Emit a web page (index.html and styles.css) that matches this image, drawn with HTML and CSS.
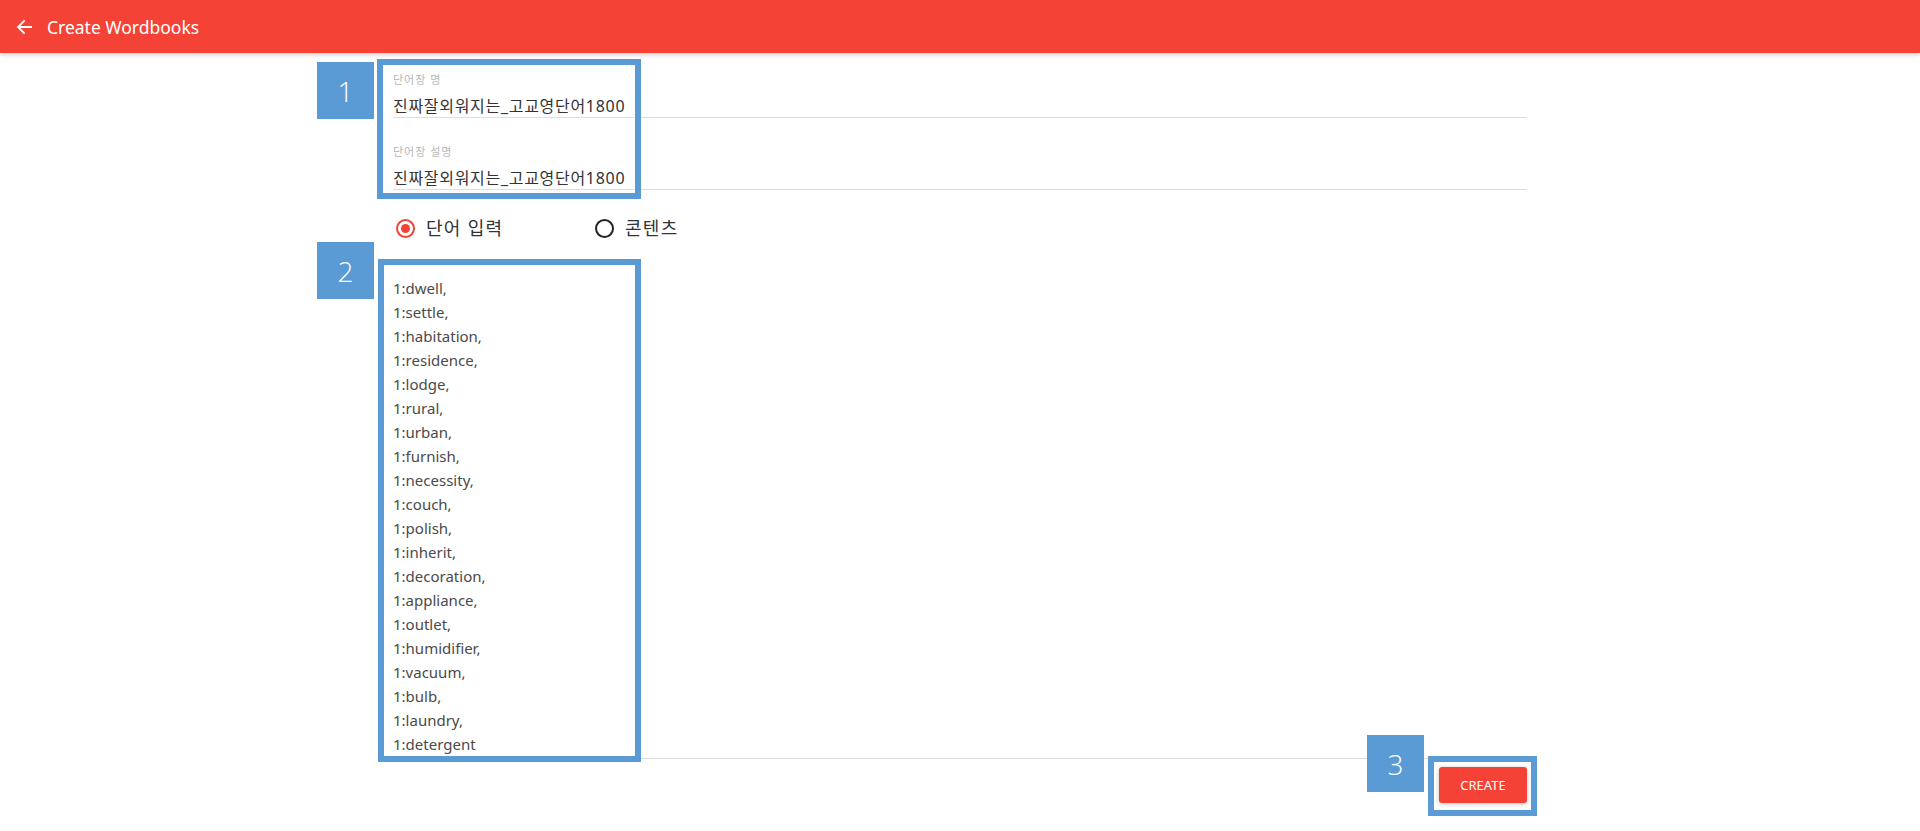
FILE: index.html
```html
<!DOCTYPE html>
<html lang="ko">
<head>
<meta charset="utf-8">
<title>Create Wordbooks</title>
<link rel="stylesheet" href="styles.css">
</head>
<body>
<header class="appbar">
  <svg class="back" width="16" height="16" viewBox="0 0 16 16" aria-hidden="true">
    <path d="M15 8H2.5M8 2L2 8l6 6" fill="none" stroke="#fff" stroke-width="1.8" stroke-linecap="square"/>
  </svg>
  <span class="title">Create Wordbooks</span>
</header>

<main class="page">
  <div class="form">
    <div class="field">
      <div class="field-label">단어장 명</div>
      <div class="field-value">진짜잘외워지는_고교영단어1800</div>
    </div>
    <div class="field field-second">
      <div class="field-label">단어장 설명</div>
      <div class="field-value">진짜잘외워지는_고교영단어1800</div>
    </div>

    <div class="radios">
      <label class="radio">
        <span class="dot checked"></span>
        <span class="radio-text">단어 입력</span>
      </label>
      <label class="radio">
        <span class="dot"></span>
        <span class="radio-text">콘텐츠</span>
      </label>
    </div>

    <div class="words">
      <div>1:dwell,</div>
      <div>1:settle,</div>
      <div>1:habitation,</div>
      <div>1:residence,</div>
      <div>1:lodge,</div>
      <div>1:rural,</div>
      <div>1:urban,</div>
      <div>1:furnish,</div>
      <div>1:necessity,</div>
      <div>1:couch,</div>
      <div>1:polish,</div>
      <div>1:inherit,</div>
      <div>1:decoration,</div>
      <div>1:appliance,</div>
      <div>1:outlet,</div>
      <div>1:humidifier,</div>
      <div>1:vacuum,</div>
      <div>1:bulb,</div>
      <div>1:laundry,</div>
      <div>1:detergent</div>
    </div>

    <div class="actions">
      <button class="create">CREATE</button>
    </div>
  </div>
</main>

<div class="annot badge badge-1">1</div>
<div class="annot frame frame-1"></div>
<div class="annot badge badge-2">2</div>
<div class="annot frame frame-2"></div>
<div class="annot badge badge-3">3</div>
<div class="annot frame frame-3"></div>
</body>
</html>
```

FILE: styles.css
```css
html, body {
  margin: 0;
  padding: 0;
  background: #fff;
}
body {
  font-family: "Noto Sans", "Noto Sans CJK KR", sans-serif;
  color: #333;
  position: relative;
  min-height: 831px;
}
.appbar {
  height: 53px;
  background: #f44336;
  display: flex;
  align-items: center;
  padding-left: 16px;
  box-shadow: 0 2px 4px rgba(0,0,0,0.18);
  color: #fff;
}
.back {
  display: block;
  margin-right: 15px;
}
.title {
  font-size: 17.5px;
  line-height: 20px;
  margin-top: 1px;
}
.page {
  padding-top: 20px;
}
.form {
  width: 1134px;
  margin: 0 auto;
}
.field {
  border-bottom: 1px solid #dedede;
}
.field-second {
  margin-top: 27px;
}
.field-label {
  font-size: 11px;
  line-height: 14px;
  color: #b8b8b8;
  letter-spacing: 1px;
}
.field-value {
  margin-top: 8px;
  font-size: 16px;
  line-height: 22px;
  color: #333;
  letter-spacing: 0.7px;
}
.radios {
  margin-top: 26px;
  height: 24px;
  display: flex;
  align-items: center;
  padding-left: 3px;
}
.radio {
  display: flex;
  align-items: center;
  width: 199px;
}
.dot {
  width: 15px;
  height: 15px;
  border: 2px solid #222;
  border-radius: 50%;
  box-sizing: content-box;
  position: relative;
  margin-right: 11px;
}
.dot.checked {
  border-color: #f44336;
}
.dot.checked::after {
  content: "";
  position: absolute;
  left: 3px;
  top: 3px;
  width: 9px;
  height: 9px;
  border-radius: 50%;
  background: #f44336;
}
.radio-text {
  font-size: 18px;
  line-height: 24px;
  color: #333;
  letter-spacing: 1.3px;
}
.words {
  margin-top: 36px;
  padding-bottom: 2px;
  border-bottom: 1px solid #dedede;
  font-size: 15px;
  line-height: 24px;
  color: #4a4a4a;
}
.actions {
  display: flex;
  justify-content: flex-end;
  margin-top: 8px;
}
.create {
  width: 88px;
  height: 36px;
  border: none;
  border-radius: 3px;
  background: #f44336;
  color: #fff;
  font-family: "Noto Sans", sans-serif;
  font-size: 13px;
  box-shadow: 0 1px 4px rgba(0,0,0,0.25);
  padding: 0;
}

/* annotation overlays */
.annot {
  position: absolute;
  box-sizing: border-box;
}
.badge {
  width: 57px;
  height: 57px;
  background: #5b9bd5;
  color: #fff;
  font-family: "Open Sans", sans-serif;
  font-weight: 300;
  font-size: 28px;
  display: flex;
  align-items: center;
  justify-content: center;
}
.frame {
  border: 6px solid #5b9bd5;
}
.badge-1 { left: 317px; top: 62px; }
.badge-2 { left: 317px; top: 242px; }
.badge-3 { left: 1367px; top: 735px; }
.frame-1 { left: 377px; top: 59px; width: 264px; height: 140px; }
.frame-2 { left: 378px; top: 259px; width: 263px; height: 503px; }
.frame-3 { left: 1428px; top: 756px; width: 109px; height: 60px; }
```
